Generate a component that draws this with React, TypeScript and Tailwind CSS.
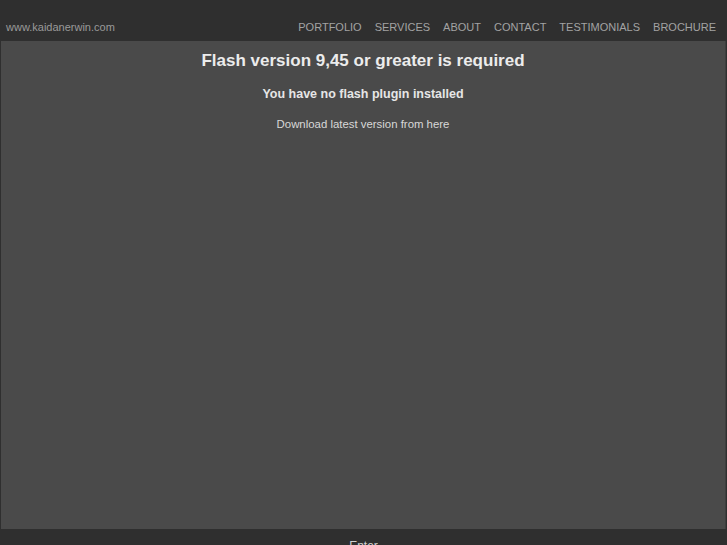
export default function App() {
  const nav = ['PORTFOLIO', 'SERVICES', 'ABOUT', 'CONTACT', 'TESTIMONIALS', 'BROCHURE'];
  return (
    <div className="h-[545px] w-full overflow-hidden bg-[#2f2f2f] font-['Liberation_Sans',Arial,sans-serif] flex flex-col">
      <header className="h-[41px] shrink-0 flex items-end justify-between pb-[8px] pl-[6px] pr-[11px]">
        <span className="text-[11px] text-[#9a9a9a] leading-none">www.kaidanerwin.com</span>
        <nav className="flex gap-[13px] text-[11px] text-[#a3a3a3] leading-none">
          {nav.map(n => (
            <a key={n} className="hover:text-white cursor-pointer">{n}</a>
          ))}
        </nav>
      </header>

      <main className="h-[488px] shrink-0 mx-px bg-[#4a4a4a] border-r border-[#3e3e3e] flex flex-col items-center pt-[11px]">
        <h1 className="text-[17px] font-bold text-[#ececec] leading-[18px]">Flash version 9,45 or greater is required</h1>
        <h2 className="mt-[17px] text-[12.5px] font-bold text-[#e6e6e6] leading-[15px]">You have no flash plugin installed</h2>
        <p className="mt-[16px] text-[11.4px] text-[#d8d8d8] leading-[13px]">
          <a className="cursor-pointer">Download latest version from here</a>
        </p>
      </main>

      <footer className="shrink-0 flex justify-center pt-[11px]">
        <span className="text-[12px] text-[#cfcfcf] leading-none">Enter</span>
      </footer>
    </div>
  );
}
